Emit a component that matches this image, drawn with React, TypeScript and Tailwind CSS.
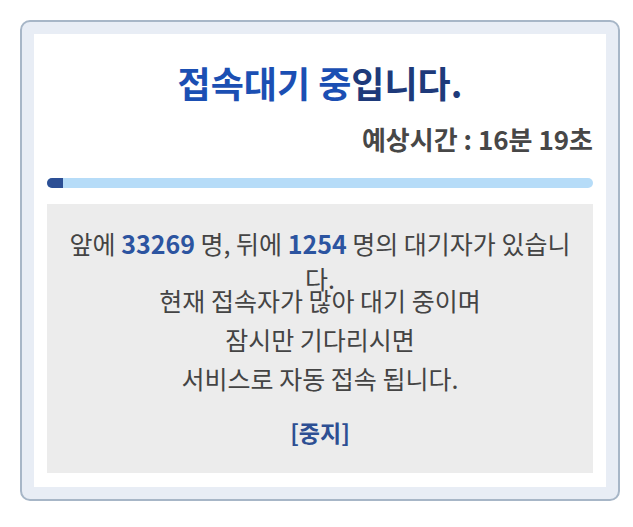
import React from 'react';

const font = { fontFamily: '"Noto Sans CJK KR", "Noto Sans", sans-serif' };

export default function App() {
  return (
    <div className="min-h-[527px] w-[633px] bg-white pt-[20px] pl-[20px]" style={font}>
      <div className="w-[600px] rounded-[10px] border-2 border-[#a7b6c7] bg-[#e8edf5] p-[12px]">
        <div className="bg-white px-[13px] pt-[24px] pb-[14px]">
          <h1 className="h-[48px] text-center text-[36px] font-bold leading-[48px]">
            <span className="text-[#1b4fb3]">접속대기 중</span>
            <span className="text-[#1e3a7a]">입니다.</span>
          </h1>

          <div className="mt-[17px] text-right text-[26px] font-bold leading-[32px] text-[#474747]">
            예상시간 : 16분 19초
          </div>

          <div className="mt-[23px] h-[10px] w-full rounded-full bg-[#b6dcf8]">
            <div className="h-full w-[16px] rounded-l-full bg-[#2c4f95]" />
          </div>

          <div className="mt-[16px] bg-[#ececec] px-[16px] pt-[22px] pb-[22px] text-center text-[25px] text-[#444]">
            <p className="h-[35px] leading-[35px]">
              앞에 <b className="font-semibold text-[#2c54a0]">33269</b> 명, 뒤에{' '}
              <b className="font-semibold text-[#2c54a0]">1254</b> 명의 대기자가 있습니다.
            </p>
            <p className="mt-[20px] leading-[39px]">현재 접속자가 많아 대기 중이며</p>
            <p className="leading-[39px]">잠시만 기다리시면</p>
            <p className="leading-[39px]">서비스로 자동 접속 됩니다.</p>
            <button className="mt-[19px] h-[30px] text-[23px] font-bold leading-[30px] text-[#2d4f93]">
              [중지]
            </button>
          </div>
        </div>
      </div>
    </div>
  );
}
